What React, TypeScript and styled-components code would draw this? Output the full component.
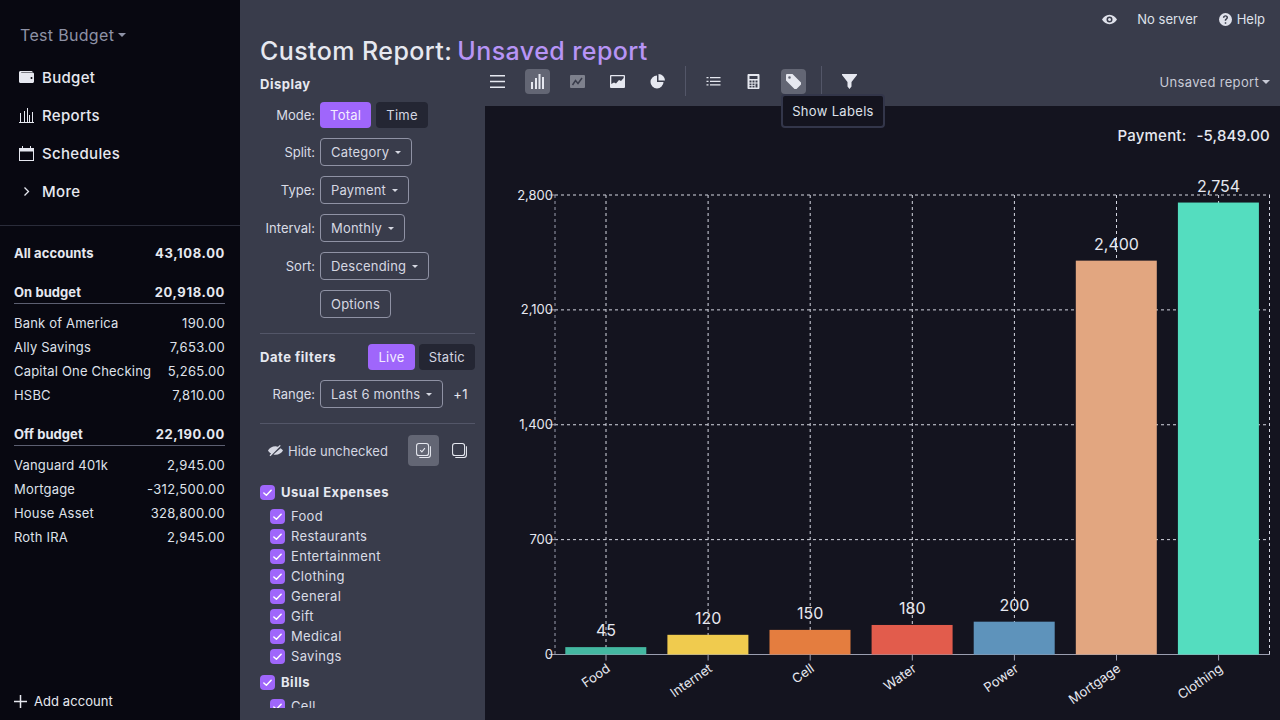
import React from 'react'
import styled, { createGlobalStyle } from 'styled-components'

const GlobalStyle = createGlobalStyle`
  html, body { margin: 0; padding: 0; height: 100%; overflow: hidden; }
  body { font-family: Inter, "Noto Sans", sans-serif; letter-spacing: 0.02em; background: #393c4b; color: #e6e8f0; }
  * { box-sizing: border-box; }
`

const Shell = styled.div`
  display: flex;
  width: 1280px;
  height: 720px;
  overflow: hidden;
`
const Sidebar = styled.aside`
  width: 240px;
  flex: none;
  display: flex;
  flex-direction: column;
  background: #080811;
`
const BudgetName = styled.div`
  height: 20px;
  margin: 25px 0 13px 20px;
  font-size: 16px;
  line-height: 20px;
  color: #8e92a6;
  display: flex;
  align-items: center;
  gap: 4px;
`
const Caret = styled.span`
  display: inline-block;
  border-left: 4px solid transparent;
  border-right: 4px solid transparent;
  border-top: 4px solid currentColor;
`
const NavItem = styled.div`
  height: 38px;
  display: flex;
  align-items: center;
  gap: 8px;
  padding-left: 19px;
  font-size: 15px;
  font-weight: 500;
  color: #e6e8f0;
  svg { width: 15px; height: 15px; flex: none; }
`
const NavDivider = styled.div`
  height: 1px;
  margin-top: 15px;
  background: #2a2c3a;
`
const AccountList = styled.div`
  flex: 1;
  padding: 16px 15px 0 14px;
`
const AccountRow = styled.div`
  display: flex;
  justify-content: space-between;
  align-items: center;
  height: 24px;
  font-size: 13px;
  color: #dfe1ea;
  span:first-child { letter-spacing: 0.015em; }
`
const AccountHead = styled.div<{ $top?: number; $rule?: boolean }>`
  display: flex;
  justify-content: space-between;
  align-items: center;
  height: ${p => (p.$rule ? 23 : 22)}px;
  margin-top: ${p => p.$top ?? 0}px;
  margin-bottom: ${p => (p.$rule ? 7 : 0)}px;
  border-bottom: ${p => (p.$rule ? '1px solid #5c5f71' : '0')};
  font-size: 13px;
  font-weight: 700;
  color: #e6e8f0;
  span:first-child { letter-spacing: 0.005em; }
  span:last-child { letter-spacing: 0.05em; }
`
const AddAccount = styled.div`
  height: 38px;
  display: flex;
  align-items: center;
  gap: 7px;
  padding: 0 0 0 14px;
  font-size: 13px;
  letter-spacing: 0.005em;
  svg { width: 13px; height: 13px; }
`

const Main = styled.main`
  flex: 1;
  min-width: 0;
  display: flex;
  flex-direction: column;
`
const TopBar = styled.div`
  height: 34px;
  flex: none;
  display: flex;
  align-items: center;
  justify-content: flex-end;
  padding: 4px 15px 0 0;
  gap: 20px;
  font-size: 13px;
  letter-spacing: 0;
  color: #dfe1ea;
  svg { width: 15px; height: 15px; display: block; }
`
const HelpLink = styled.span`
  display: flex;
  align-items: center;
  gap: 5px;
  margin-left: 1px;
  svg { width: 13px; height: 13px; }
`
const Title = styled.h1`
  margin: 0;
  height: 32px;
  flex: none;
  padding-left: 20px;
  font-size: 25px;
  line-height: 34px;
  font-weight: 500;
  letter-spacing: 0.017em;
  color: #e6e8f0;
  white-space: nowrap;
`
const ReportName = styled.span`
  color: #b794f6;
  margin-left: 5px;
  letter-spacing: 0.017em;
`
const Body = styled.div`
  flex: 1;
  min-height: 0;
  display: flex;
`
const Filters = styled.section`
  width: 245px;
  flex: none;
  padding: 10px 10px 12px 20px;
  display: flex;
  flex-direction: column;
  overflow: hidden;
  font-size: 13px;
`
const SectionLabel = styled.div`
  font-size: 13px;
  font-weight: 700;
  line-height: 16px;
  letter-spacing: 0.04em;
  color: #e6e8f0;
`
const FilterRow = styled.div<{ $top: number }>`
  display: flex;
  align-items: center;
  gap: 5px;
  margin-top: ${p => p.$top}px;
  height: 28px;
  flex: none;
`
const RowLabel = styled.span`
  width: 55px;
  text-align: right;
  letter-spacing: 0;
  color: #dadce6;
  white-space: nowrap;
  flex: none;
`
const Pill = styled.button<{ $on?: boolean }>`
  height: 26px;
  padding: 0 10px;
  border: 0;
  border-radius: 4px;
  font: 13px Inter, sans-serif;
  letter-spacing: 0.02em;
  background: ${p => (p.$on ? '#9f66fb' : '#242633')};
  color: ${p => (p.$on ? '#f3edff' : '#d5d7e2')};
`
const Select = styled.button`
  height: 28px;
  padding: 0 10px;
  display: inline-flex;
  align-items: center;
  gap: 6px;
  background: transparent;
  border: 1px solid #8f92a4;
  border-radius: 4px;
  font: 13px Inter, sans-serif;
  letter-spacing: 0.015em;
  color: #d6d8e2;
  white-space: nowrap;
`
const SmallCaret = styled(Caret)`
  border-left-width: 3.5px;
  border-right-width: 3.5px;
  border-top-width: 3.5px;
`
const Rule = styled.div<{ $top: number }>`
  height: 1px;
  flex: none;
  background: #535668;
  margin-top: ${p => p.$top}px;
`
const DateHead = styled.div`
  display: flex;
  align-items: center;
  height: 26px;
  flex: none;
  margin-top: 10px;
  gap: 4px;
`
const DateTitle = styled(SectionLabel)`
  flex: 1;
`
const Extra = styled.span`
  margin-left: 5px;
  color: #e6e8f0;
`
const HideRow = styled.div`
  display: flex;
  align-items: center;
  height: 31px;
  flex: none;
  margin-top: 11px;
  padding-left: 8px;
`
const HideLabel = styled.span`
  flex: 1;
  display: flex;
  align-items: center;
  gap: 5px;
  letter-spacing: 0;
  color: #d5d7e2;
  svg { width: 15px; height: 15px; }
`
const SquareBtn = styled.span<{ $on?: boolean }>`
  width: 31px;
  height: 31px;
  margin-left: 5px;
  border-radius: 4px;
  display: flex;
  align-items: center;
  justify-content: center;
  background: ${p => (p.$on ? '#636674' : 'transparent')};
  color: #e6e8f0;
  svg { width: 15px; height: 15px; }
`
const Tree = styled.div`
  margin-top: 16px;
  flex: 1;
  min-height: 0;
  overflow: hidden;
`
const GroupRow = styled.div<{ $top?: number }>`
  display: flex;
  align-items: center;
  gap: 6px;
  height: 20px;
  margin-top: ${p => p.$top ?? 0}px;
  margin-bottom: 4px;
  font-weight: 700;
  letter-spacing: 0.04em;
  color: #e6e8f0;
`
const LeafRow = styled.div`
  display: flex;
  align-items: center;
  gap: 6px;
  height: 20px;
  padding-left: 10px;
  color: #dadce6;
`
const Check = styled.span`
  width: 15px;
  height: 15px;
  flex: none;
  border-radius: 4px;
  background: #9f66fb;
  display: flex;
  align-items: center;
  justify-content: center;
  svg { width: 11px; height: 11px; }
`
const ReportColumn = styled.div`
  flex: 1;
  min-width: 0;
  display: flex;
  flex-direction: column;
  position: relative;
`
const Toolbar = styled.div`
  height: 40px;
  flex: none;
  display: flex;
  align-items: flex-start;
  padding-right: 10px;
`
const ToolBtn = styled.span<{ $on?: boolean; $dim?: boolean }>`
  width: 25px;
  height: 25px;
  margin: 3px 0 0 0;
  border-radius: 4px;
  display: flex;
  align-items: center;
  justify-content: center;
  background: ${p => (p.$on ? '#636674' : 'transparent')};
  color: #e6e8f0;
  opacity: ${p => (p.$dim ? 0.4 : 1)};
  & + & { margin-left: 15px; }
  svg { width: 15px; height: 15px; }
`
const ToolSep = styled.span`
  width: 1px;
  height: 30px;
  background: #535668;
  margin: 0 15px;
`
const ToolGroup = styled.div`
  display: flex;
`
const SavedMenu = styled.div`
  margin: 3px 0 0 auto;
  height: 25px;
  display: flex;
  align-items: center;
  gap: 3px;
  font-size: 13px;
  color: #c8cad6;
`
const Tooltip = styled.div`
  position: absolute;
  left: 296px;
  top: 28px;
  width: 104px;
  height: 34px;
  padding-bottom: 1px;
  background: #14141f;
  border: 2px solid #33364a;
  border-radius: 4px;
  display: flex;
  align-items: center;
  justify-content: center;
  font-size: 13px;
  color: #dfe1ea;
`
const ChartCard = styled.div`
  flex: 1;
  min-height: 0;
  display: flex;
  flex-direction: column;
  background: #14141f;
`
const ChartHead = styled.div`
  height: 60px;
  flex: none;
  padding: 20px 10px 0 0;
  display: flex;
  justify-content: flex-end;
  gap: 10px;
  font-size: 15px;
  font-weight: 500;
  line-height: 20px;
  letter-spacing: 0.013em;
  color: #e6e8f0;
`
const ChartSvg = styled.svg`
  display: block;
  width: 795px;
  height: 554px;
  letter-spacing: 0;
  text { font-family: Inter, sans-serif; fill: #e6e8f0; }
`

const leaves = ['Food', 'Restaurants', 'Entertainment', 'Clothing', 'General', 'Gift', 'Medical', 'Savings']

const bars = [
  { name: 'Food', value: 45, color: '#44b8a1' },
  { name: 'Internet', value: 120, color: '#f0cb4e' },
  { name: 'Cell', value: 150, color: '#e47d3f' },
  { name: 'Water', value: 180, color: '#e25c4c' },
  { name: 'Power', value: 200, color: '#5e93bb' },
  { name: 'Mortgage', value: 2400, color: '#e2a680' },
  { name: 'Clothing', value: 2754, color: '#54ddbf' },
]

const onBudget = [['Bank of America', '190.00'], ['Ally Savings', '7,653.00'], ['Capital One Checking', '5,265.00'], ['HSBC', '7,810.00']]
const offBudget = [['Vanguard 401k', '2,945.00'], ['Mortgage', '-312,500.00'], ['House Asset', '328,800.00'], ['Roth IRA', '2,945.00']]

const PLOT_LEFT = 555
const PLOT_RIGHT = 1270
const PLOT_TOP = 195
const PLOT_BOTTOM = 654.5
const BAND = 102.1
const yFor = (v: number) => PLOT_BOTTOM - (v / 2800) * (PLOT_BOTTOM - PLOT_TOP)
const cxFor = (i: number) => PLOT_LEFT + 51 + BAND * i

const Tick = () => (
  <svg viewBox="0 0 12 12" fill="none" stroke="#fff" strokeWidth="1.6" strokeLinecap="round" strokeLinejoin="round">
    <path d="M2 6.500 4.800 9 10 3.500" />
  </svg>
)

const Chart = () => (
  <ChartSvg viewBox="485 166 795 554">
    {[0, 700, 1400, 2100, 2800].map(v => (
      <g key={v}>
        {v > 0 && <line x1={PLOT_LEFT} x2={PLOT_RIGHT} y1={yFor(v)} y2={yFor(v)} stroke="#d5d7e2" strokeDasharray="3 3" />}
        <line x1={PLOT_LEFT - 6} x2={PLOT_LEFT} y1={yFor(v)} y2={yFor(v)} stroke="#9b9eb0" />
        <text x={PLOT_LEFT - 2} y={yFor(v) + 4.5} textAnchor="end" fontSize="13">{v === 0 ? '0' : v.toLocaleString('en-US')}</text>
      </g>
    ))}
    <line x1={PLOT_LEFT} x2={PLOT_LEFT} y1={PLOT_TOP} y2={PLOT_BOTTOM} stroke="#9b9eb0" strokeDasharray="3 3" />
    <line x1={PLOT_RIGHT - 0.5} x2={PLOT_RIGHT - 0.5} y1={PLOT_TOP} y2={PLOT_BOTTOM} stroke="#d5d7e2" strokeDasharray="3 3" />
    {bars.map((b, i) => (
      <line key={b.name} x1={cxFor(i)} x2={cxFor(i)} y1={PLOT_TOP} y2={PLOT_BOTTOM} stroke="#d5d7e2" strokeDasharray="3 3" />
    ))}
    <line x1={PLOT_LEFT} x2={PLOT_RIGHT} y1={PLOT_BOTTOM} y2={PLOT_BOTTOM} stroke="#9b9eb0" />
    {bars.map((b, i) => {
      const cx = cxFor(i)
      const top = yFor(b.value)
      const lx = cx + 5
      const ly = PLOT_BOTTOM + 16
      return (
        <g key={b.name}>
          <rect x={cx - 40.7} y={top} width={81} height={PLOT_BOTTOM - top} fill={b.color} />
          <line x1={cx} x2={cx} y1={PLOT_BOTTOM} y2={PLOT_BOTTOM + 6} stroke="#9b9eb0" />
          <text x={cx} y={top - 11} textAnchor="middle" fontSize="16">{b.value.toLocaleString('en-US')}</text>
          <text x={lx} y={ly} textAnchor="end" fontSize="13" transform={`rotate(-35 ${lx} ${ly})`}>{b.name}</text>
        </g>
      )
    })}
  </ChartSvg>
)

const App = () => (
  <Shell>
    <GlobalStyle />
    <Sidebar>
      <BudgetName>Test Budget<Caret /></BudgetName>
      <NavItem>
        <svg viewBox="0 0 15 15" fill="currentColor"><path fillRule="evenodd" d="M1.500 1h11c.6 0 1 .3 1.200.9H2.200v.5h11.300c.8 0 1.500.6 1.500 1.400v7.700c0 .8-.7 1.500-1.500 1.500h-12C.7 13 0 12.300 0 11.500V2.500C0 1.700.7 1 1.500 1ZM12.500 7a1 1 0 1 0 0 2 1 1 0 0 0 0-2Z" /></svg>
        Budget
      </NavItem>
      <NavItem>
        <svg viewBox="0 0 15 15" fill="currentColor"><path d="M0 14h15v1H0zM1 5h1v9H1zM5 3h1v11H5zM8 0h1v14H8zM10 7h1v7h-1zM13 4h1v10h-1z" /></svg>
        Reports
      </NavItem>
      <NavItem>
        <svg viewBox="0 0 15 15" fill="currentColor"><path fillRule="evenodd" d="M3 0h1v2h7V0h1v2h3v13H0V2h3V0Zm-2 5.500V14h13V5.500H1Z" /></svg>
        Schedules
      </NavItem>
      <NavItem>
        <svg viewBox="0 0 15 15" fill="none" stroke="currentColor" strokeWidth="1.300"><path d="m5.500 3.500 4 4-4 4" /></svg>
        More
      </NavItem>
      <NavDivider />
      <AccountList>
        <AccountHead><span>All accounts</span><span>43,108.00</span></AccountHead>
        <AccountHead $rule $top={17}><span>On budget</span><span>20,918.00</span></AccountHead>
        {onBudget.map(([n, v]) => <AccountRow key={n}><span>{n}</span><span>{v}</span></AccountRow>)}
        <AccountHead $rule $top={16}><span>Off budget</span><span>22,190.00</span></AccountHead>
        {offBudget.map(([n, v]) => <AccountRow key={n}><span>{n}</span><span>{v}</span></AccountRow>)}
      </AccountList>
      <AddAccount>
        <svg viewBox="0 0 13 13" stroke="currentColor" strokeWidth="1.500"><path d="M6.500 0v13M0 6.500h13" /></svg>
        Add account
      </AddAccount>
    </Sidebar>
    <Main>
      <TopBar>
        <svg viewBox="0 0 16 16" fill="currentColor"><path fillRule="evenodd" d="M8 3c3.600 0 6.500 2.500 8 5-1.500 2.500-4.400 5-8 5s-6.500-2.500-8-5c1.500-2.500 4.400-5 8-5Zm0 1.800a3.200 3.200 0 1 0 0 6.400 3.200 3.200 0 0 0 0-6.400Zm0 1.600a1.600 1.600 0 1 1 0 3.200 1.600 1.600 0 0 1 0-3.200Z" /></svg>
        <span>No server</span>
        <HelpLink>
          <svg viewBox="0 0 14 14" fill="currentColor"><path fillRule="evenodd" d="M7 0a7 7 0 1 1 0 14A7 7 0 0 1 7 0Zm-.8 10v1.500h1.600V10H6.200ZM7 2.500c-1.600 0-2.700 1-2.800 2.500h1.600c.1-.7.500-1.100 1.200-1.100s1.100.4 1.100 1c0 .5-.3.800-.9 1.200-.8.500-1.100 1.100-1 2.200h1.500c0-.7.200-1 .8-1.400.8-.5 1.200-1.100 1.200-2 0-1.400-1.100-2.400-2.700-2.400Z" /></svg>
          Help
        </HelpLink>
      </TopBar>
      <Title>Custom Report:<ReportName>Unsaved report</ReportName></Title>
      <Body>
        <Filters>
          <SectionLabel>Display</SectionLabel>
          <FilterRow $top={9}><RowLabel>Mode:</RowLabel><Pill $on>Total</Pill><Pill>Time</Pill></FilterRow>
          <FilterRow $top={9}><RowLabel>Split:</RowLabel><Select>Category<SmallCaret /></Select></FilterRow>
          <FilterRow $top={10}><RowLabel>Type:</RowLabel><Select>Payment<SmallCaret /></Select></FilterRow>
          <FilterRow $top={10}><RowLabel>Interval:</RowLabel><Select>Monthly<SmallCaret /></Select></FilterRow>
          <FilterRow $top={10}><RowLabel>Sort:</RowLabel><Select>Descending<SmallCaret /></Select></FilterRow>
          <FilterRow $top={10}><RowLabel /><Select>Options</Select></FilterRow>
          <Rule $top={15} />
          <DateHead><DateTitle>Date filters</DateTitle><Pill $on>Live</Pill><Pill>Static</Pill></DateHead>
          <FilterRow $top={10}><RowLabel>Range:</RowLabel><Select>Last 6 months<SmallCaret /></Select><Extra>+1</Extra></FilterRow>
          <Rule $top={15} />
          <HideRow>
            <HideLabel>
              <svg viewBox="0 0 16 16" fill="currentColor"><path d="M8 3.500c.9 0 1.800.2 2.600.5l2-2 1 1-11 11-1-1 1.700-1.700C1.900 10.700.800 9.400 0 8c1.500-2.500 4.400-4.500 8-4.500Zm5.400 2c1 .7 1.900 1.600 2.600 2.500-1.500 2.500-4.400 4.500-8 4.500-.8 0-1.500-.1-2.200-.3l7.600-6.700Z" /></svg>
              Hide unchecked
            </HideLabel>
            <SquareBtn $on>
              <svg viewBox="0 0 16 16" fill="none" stroke="currentColor" strokeWidth="1.100"><rect x="0.600" y="0.600" width="12.800" height="12.800" rx="2.500" /><path d="M15.400 3.500v9.400a2.500 2.500 0 0 1-2.500 2.500H3.500" /><path d="m4.500 7.500 1.800 2 3.200-4" /></svg>
            </SquareBtn>
            <SquareBtn>
              <svg viewBox="0 0 16 16" fill="none" stroke="currentColor" strokeWidth="1.100"><rect x="0.600" y="0.600" width="12.800" height="12.800" rx="2.500" /><path d="M15.400 3.500v9.400a2.500 2.500 0 0 1-2.500 2.500H3.500" /></svg>
            </SquareBtn>
          </HideRow>
          <Tree>
            <GroupRow><Check><Tick /></Check>Usual Expenses</GroupRow>
            {leaves.map(l => <LeafRow key={l}><Check><Tick /></Check>{l}</LeafRow>)}
            <GroupRow $top={6}><Check><Tick /></Check>Bills</GroupRow>
            <LeafRow><Check><Tick /></Check>Cell</LeafRow>
          </Tree>
        </Filters>
        <ReportColumn>
          <Toolbar>
            <ToolGroup>
              <ToolBtn>
                <svg viewBox="0 0 15 15" fill="currentColor"><path d="M0 1h15v1.500H0zM0 6.700h15v1.500H0zM0 12.500h15V14H0z" /></svg>
              </ToolBtn>
              <ToolBtn $on>
                <svg viewBox="0 0 15 15" fill="currentColor"><path d="M1 8h2v7H1zM5 4h2v11H5zM8.500 0h2v15h-2zM12 3h2v12h-2z" /></svg>
              </ToolBtn>
              <ToolBtn $dim>
                <svg viewBox="0 0 15 13" fill="currentColor"><path d="M1 0h13a1 1 0 0 1 1 1v11a1 1 0 0 1-1 1H1a1 1 0 0 1-1-1V1a1 1 0 0 1 1-1Z" /><path d="M2.500 10 5.500 5.500l2.500 3 4-5.500" fill="none" stroke="#393c4b" strokeWidth="1.500" /></svg>
              </ToolBtn>
              <ToolBtn>
                <svg viewBox="0 0 15 13" fill="currentColor"><path fillRule="evenodd" d="M1 0h13a1 1 0 0 1 1 1v11a1 1 0 0 1-1 1H1a1 1 0 0 1-1-1V1a1 1 0 0 1 1-1Zm.300 1.300v7.700L4 7.500l2 1 3-3.500 2 1 2.700-3V1.300H1.300Z" /></svg>
              </ToolBtn>
              <ToolBtn>
                <svg viewBox="0 0 15 15" fill="currentColor"><path d="M7 1.500V8h6.500A6.500 6.500 0 1 1 7 1.500Z" /><path d="M8.500 0A6.500 6.500 0 0 1 15 6.500H8.500V0Z" /></svg>
              </ToolBtn>
            </ToolGroup>
            <ToolSep />
            <ToolGroup>
              <ToolBtn>
                <svg viewBox="0 0 15 15" fill="currentColor"><path d="M.500 3h2v1.300h-2zM4 3h10.500v1.300H4zM.500 6.700h2V8h-2zM4 6.700h10.500V8H4zM.500 10.300h2v1.300h-2zM4 10.300h10.500v1.300H4z" /></svg>
              </ToolBtn>
              <ToolBtn>
                <svg viewBox="0 0 15 15" fill="currentColor"><path fillRule="evenodd" d="M2.500 0h10c.6 0 1 .5 1 1v13c0 .5-.4 1-1 1h-10c-.6 0-1-.5-1-1V1c0-.5.4-1 1-1ZM3.500 2v3h8V2h-8Zm0 4.500v2h2v-2h-2Zm3 0v2h2v-2h-2Zm3 0v2h2v-2h-2ZM3.500 9.500v1.800h2V9.500h-2Zm3 0v1.800h2V9.500h-2Zm3 0v4h2v-4h-2ZM3.500 12v1.500h2V12h-2Zm3 0v1.500h2V12h-2Z" /></svg>
              </ToolBtn>
              <ToolBtn $on>
                <svg viewBox="0 0 15 15" fill="currentColor"><path fillRule="evenodd" d="M1 0h5.500L15 8.500a1.500 1.500 0 0 1 0 2L10.500 15a1.500 1.500 0 0 1-2 0L0 6.500V1a1 1 0 0 1 1-1Zm2.500 2.200a1.300 1.300 0 1 0 0 2.600 1.300 1.300 0 0 0 0-2.600Z" /></svg>
              </ToolBtn>
            </ToolGroup>
            <ToolSep />
            <ToolBtn>
              <svg viewBox="0 0 15 15" fill="currentColor"><path d="M0 0h15v1L9.500 8v4.500L7.500 15l-2-2.500V8L0 1z" /></svg>
            </ToolBtn>
            <SavedMenu>Unsaved report<Caret /></SavedMenu>
          </Toolbar>
          <Tooltip>Show Labels</Tooltip>
          <ChartCard>
            <ChartHead><span>Payment:</span><span>-5,849.00</span></ChartHead>
            <Chart />
          </ChartCard>
        </ReportColumn>
      </Body>
    </Main>
  </Shell>
)

export default App
